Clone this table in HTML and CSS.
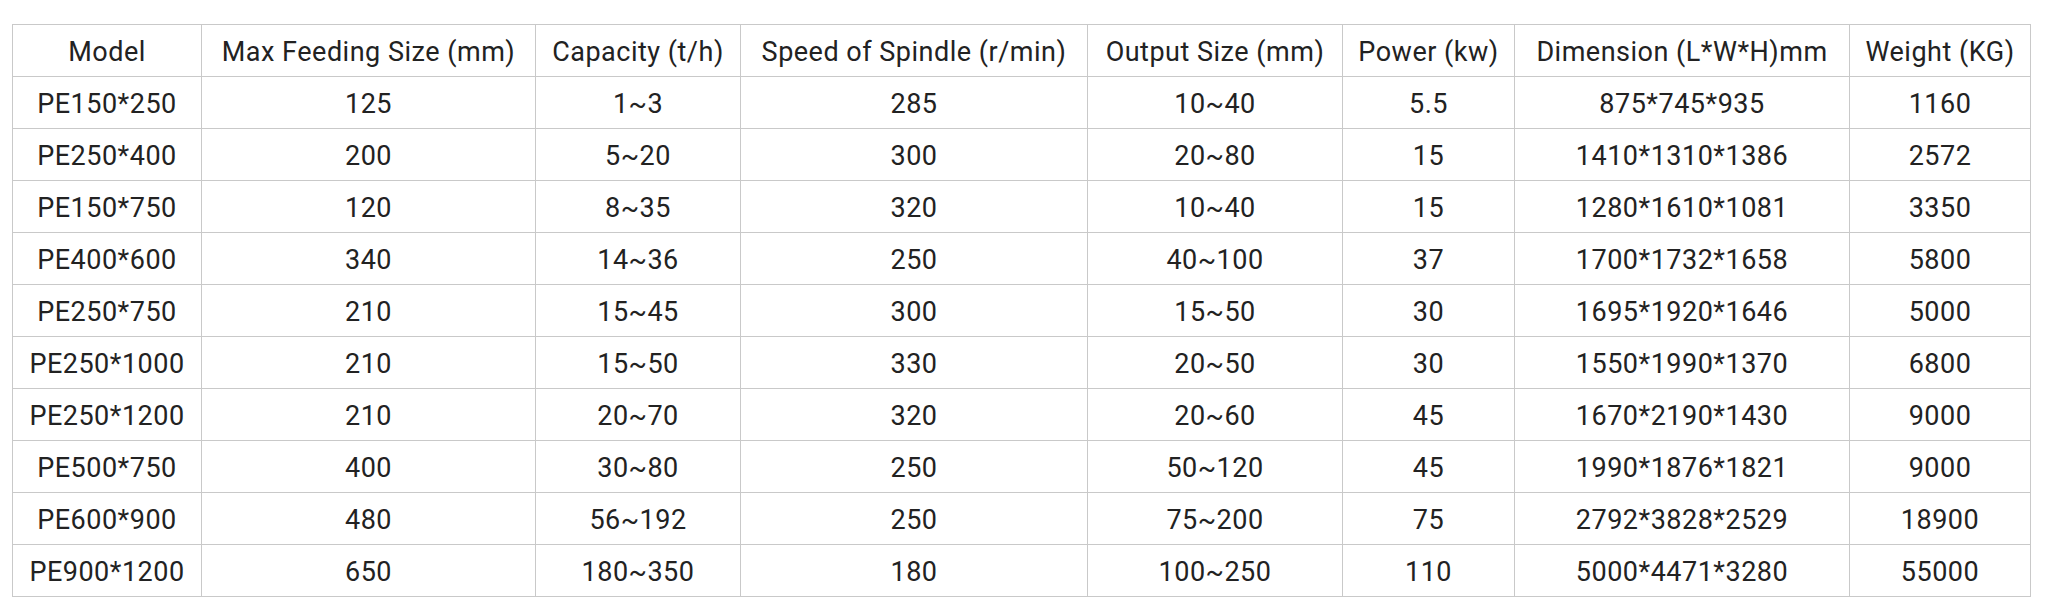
FILE: index.html
```html
<!DOCTYPE html>
<html lang="en">
<head>
<meta charset="utf-8">
<title>PE Jaw Crusher Specifications</title>
<link rel="stylesheet" href="styles.css">
</head>
<body>
<div class="wrap">
<table class="spec">
<colgroup>
<col class="c-model"><col class="c-feed"><col class="c-cap"><col class="c-speed"><col class="c-out"><col class="c-power"><col class="c-dim"><col class="c-weight">
</colgroup>
<thead>
<tr><th>Model</th><th>Max Feeding Size (mm)</th><th>Capacity (t/h)</th><th>Speed of Spindle (r/min)</th><th>Output Size (mm)</th><th>Power (kw)</th><th>Dimension (L*W*H)mm</th><th>Weight (KG)</th></tr>
</thead>
<tbody>
<tr><td>PE150*250</td><td>125</td><td>1~3</td><td>285</td><td>10~40</td><td>5.5</td><td>875*745*935</td><td>1160</td></tr>
<tr><td>PE250*400</td><td>200</td><td>5~20</td><td>300</td><td>20~80</td><td>15</td><td>1410*1310*1386</td><td>2572</td></tr>
<tr><td>PE150*750</td><td>120</td><td>8~35</td><td>320</td><td>10~40</td><td>15</td><td>1280*1610*1081</td><td>3350</td></tr>
<tr><td>PE400*600</td><td>340</td><td>14~36</td><td>250</td><td>40~100</td><td>37</td><td>1700*1732*1658</td><td>5800</td></tr>
<tr><td>PE250*750</td><td>210</td><td>15~45</td><td>300</td><td>15~50</td><td>30</td><td>1695*1920*1646</td><td>5000</td></tr>
<tr><td>PE250*1000</td><td>210</td><td>15~50</td><td>330</td><td>20~50</td><td>30</td><td>1550*1990*1370</td><td>6800</td></tr>
<tr><td>PE250*1200</td><td>210</td><td>20~70</td><td>320</td><td>20~60</td><td>45</td><td>1670*2190*1430</td><td>9000</td></tr>
<tr><td>PE500*750</td><td>400</td><td>30~80</td><td>250</td><td>50~120</td><td>45</td><td>1990*1876*1821</td><td>9000</td></tr>
<tr><td>PE600*900</td><td>480</td><td>56~192</td><td>250</td><td>75~200</td><td>75</td><td>2792*3828*2529</td><td>18900</td></tr>
<tr><td>PE900*1200</td><td>650</td><td>180~350</td><td>180</td><td>100~250</td><td>110</td><td>5000*4471*3280</td><td>55000</td></tr>
</tbody>
</table>
</div>
</body>
</html>
```

FILE: styles.css
```css
html, body {
  margin: 0;
  padding: 0;
  background: #ffffff;
}

.wrap {
  padding: 24px 0 0 12px;
}

.spec {
  border-collapse: collapse;
  table-layout: fixed;
  width: 2019px;
  font-family: Roboto, "Liberation Sans", sans-serif;
  font-size: 27px;
  letter-spacing: 0.5px;
  color: #222222;
}

.spec th,
.spec td {
  border: 1px solid #c9c9c9;
  height: 52px;
  padding: 3px 0 0;
  text-align: center;
  vertical-align: middle;
  font-weight: 400;
  white-space: nowrap;
  box-sizing: border-box;
}

.c-model { width: 189px; }
.c-feed { width: 334px; }
.c-cap { width: 205px; }
.c-speed { width: 347px; }
.c-out { width: 255px; }
.c-power { width: 172px; }
.c-dim { width: 335px; }
.c-weight { width: 181px; }
```
